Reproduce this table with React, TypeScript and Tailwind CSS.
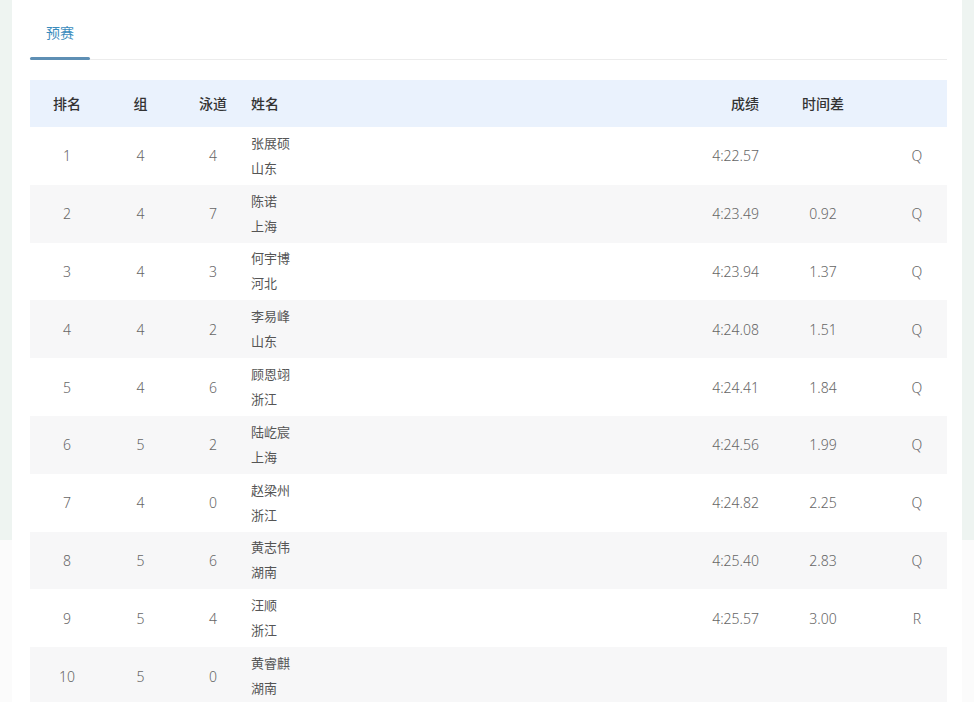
const ROWS = [
  { rank: 1, group: 4, lane: 4, name: "张展硕", team: "山东", time: "4:22.57", diff: "", mark: "Q" },
  { rank: 2, group: 4, lane: 7, name: "陈诺", team: "上海", time: "4:23.49", diff: "0.92", mark: "Q" },
  { rank: 3, group: 4, lane: 3, name: "何宇博", team: "河北", time: "4:23.94", diff: "1.37", mark: "Q" },
  { rank: 4, group: 4, lane: 2, name: "李易峰", team: "山东", time: "4:24.08", diff: "1.51", mark: "Q" },
  { rank: 5, group: 4, lane: 6, name: "顾恩翊", team: "浙江", time: "4:24.41", diff: "1.84", mark: "Q" },
  { rank: 6, group: 5, lane: 2, name: "陆屹宸", team: "上海", time: "4:24.56", diff: "1.99", mark: "Q" },
  { rank: 7, group: 4, lane: 0, name: "赵梁州", team: "浙江", time: "4:24.82", diff: "2.25", mark: "Q" },
  { rank: 8, group: 5, lane: 6, name: "黄志伟", team: "湖南", time: "4:25.40", diff: "2.83", mark: "Q" },
  { rank: 9, group: 5, lane: 4, name: "汪顺", team: "浙江", time: "4:25.57", diff: "3.00", mark: "R" },
  { rank: 10, group: 5, lane: 0, name: "黄睿麒", team: "湖南", time: "", diff: "", mark: "" },
];

const FONT = "font-['Noto_Sans','Noto_Sans_CJK_SC',sans-serif]";

export default function App() {
  return (
    <div className={`flex w-[974px] h-[702px] overflow-hidden bg-white ${FONT}`}>
      <div className="flex flex-col w-[12px] shrink-0">
        <div className="h-[540px] bg-[#eef4f1]" />
        <div className="flex-1 bg-[#fbfbfb]" />
      </div>

      <div className="w-[950px] shrink-0 bg-white pl-[18px] pr-[15px]">
        {/* tabs */}
        <div className="relative h-[60px] border-b border-[#ececec]">
          <div className="absolute left-0 bottom-[-1px] w-[60px] h-[3px] rounded-full bg-[#5e8fb4]" />
          <div className="pt-[22px] w-[60px] text-center text-[14px] text-[#3a8cbd]">预赛</div>
        </div>

        {/* table */}
        <div className="mt-[20px]">
          <div className="flex items-center h-[47px] bg-[#eaf2fd] text-[14px] font-medium text-[#333]">
            <div className="w-[74px] text-center">排名</div>
            <div className="w-[73px] text-center">组</div>
            <div className="w-[72px] text-center">泳道</div>
            <div className="flex-1 pl-[2px]">姓名</div>
            <div className="w-[100px] text-right pr-[10px]">成绩</div>
            <div className="w-[108px] text-center">时间差</div>
            <div className="w-[70px]" />
          </div>

          {ROWS.map((r, i) => (
            <div
              key={r.rank}
              className={`flex items-center h-[57.8px] text-[14px] font-light text-[#666] ${i % 2 === 1 ? "bg-[#f7f7f8]" : "bg-white"}`}
            >
              <div className="w-[74px] text-center">{r.rank}</div>
              <div className="w-[73px] text-center">{r.group}</div>
              <div className="w-[72px] text-center">{r.lane}</div>
              <div className="flex-1 pl-[2px] text-[13px] font-normal leading-[25px] text-[#555]">
                <div>{r.name}</div>
                <div>{r.team}</div>
              </div>
              <div className="w-[100px] text-right pr-[10px]">{r.time}</div>
              <div className="w-[108px] text-center">{r.diff}</div>
              <div className="w-[70px] text-center pl-[10px]">{r.mark}</div>
            </div>
          ))}
        </div>
      </div>

      <div className="flex flex-col w-[12px] shrink-0">
        <div className="h-[540px] bg-[#eef4f1]" />
        <div className="flex-1 bg-[#fbfbfb]" />
      </div>
    </div>
  );
}
